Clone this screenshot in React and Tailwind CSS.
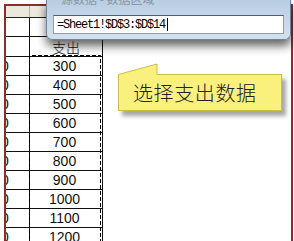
const rows = ['300', '400', '500', '600', '700', '800', '900', '1000', '1100', '1200']

const cellFont = { fontFamily: '"Liberation Sans", Arial, sans-serif' }

const App = () => (
  <div className="relative h-[241px] w-[294px] overflow-hidden bg-white">
    {/* red frame around the captured sheet */}
    <div className="ml-[4px] mt-[4px] h-[237px] w-[289px] border-x-2 border-t-2 border-[#8e2b2b]">
      <div className="w-[97px] text-[14px] text-[#111]" style={cellFont}>
        <div className="flex h-[12px] border-b border-[#222] bg-[#ebe8dc]">
          <div className="w-[24px] border-r border-[#b9b5a8]" />
          <div className="w-[73px] border-r border-[#222]" />
        </div>
        <div className="flex h-[19px] border-b border-[#111]">
          <div className="w-[24px] border-r border-[#111]" />
          <div className="w-[73px] border-r border-[#111]" />
        </div>
        <div className="flex h-[20px] border-b border-[#111]">
          <div className="w-[24px] border-r border-[#111]" />
          <div
            className="flex w-[73px] items-center justify-center border-r border-[#111] pt-[2px] font-light"
            style={{ fontFamily: '"Noto Sans CJK SC", sans-serif' }}
          >
            支出
          </div>
        </div>
        {rows.map((v) => (
          <div key={v} className="flex h-[19px] border-b border-[#111] leading-[18px]">
            <div className="w-[24px] overflow-hidden border-r border-[#111]">
              <span className="-ml-[5px] block">0</span>
            </div>
            <div className="w-[73px] border-r border-[#111] pr-[3px] text-center">{v}</div>
          </div>
        ))}
      </div>
    </div>

    {/* marching ants around the selected column */}
    <svg className="absolute left-[29px] top-[55px]" width="73" height="190">
      <path d="M0.5 190 V0.5 H71.5 V190" fill="none" stroke="#000" strokeDasharray="4 2" />
    </svg>

    {/* range picker dialog */}
    <div className="absolute left-[46px] top-0 h-[40px] w-[245px] rounded-b-[6px] border border-t-0 border-[#71839a] bg-gradient-to-b from-[#b9cde3] to-[#d3e1ef] px-[6px] shadow-[0_6px_10px_rgba(0,0,0,0.6)]">
      <div className="h-[14px] overflow-hidden">
        <div
          className="-mt-[10px] pl-[8px] text-[12px] text-[#8a98a8]"
          style={{ fontFamily: '"Noto Sans CJK SC", sans-serif' }}
        >
          源数据 - 数据区域
        </div>
      </div>
      <div className="mt-[1px] flex h-[19px] items-center border border-[#8e9cad] border-t-[#4f5f72] bg-white pl-[3px]">
        <span
          className="text-[12px] leading-none tracking-[-1.2px] text-black"
          style={{ fontFamily: '"Liberation Mono", monospace' }}
        >
          =Sheet1!$D$3:$D$14
        </span>
        <span className="ml-[2px] h-[13px] w-px bg-black" />
      </div>
    </div>

    {/* yellow callout */}
    <div
      className="absolute left-[118px] top-[74px] flex h-[37px] w-[164px] items-center border border-[#cdbd45] bg-[#f9f07e] pl-[14px] text-[20px] font-light tracking-[0.6px] text-[#222] shadow-[4px_5px_4px_rgba(0,0,0,0.35)]"
      style={{ fontFamily: '"Noto Sans CJK SC", sans-serif' }}
    >
      选择支出数据
    </div>
    <svg className="absolute left-[118px] top-[63px]" width="40" height="13">
      <path d="M0.5 11.5 L39 1 V13 H1 Z" fill="#f9f07e" />
      <path d="M0.5 11.5 L39 1 V11.5" fill="none" stroke="#cdbd45" />
    </svg>
  </div>
)

export default App
